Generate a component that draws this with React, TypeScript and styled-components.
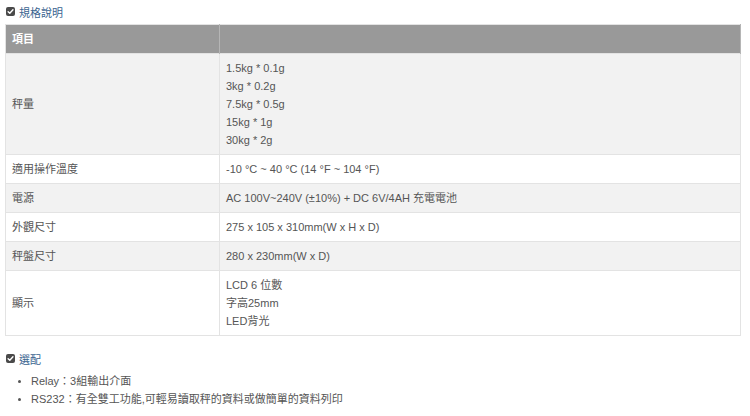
import React from "react";
import styled, { createGlobalStyle } from "styled-components";

const GlobalStyle = createGlobalStyle`
  html, body {
    margin: 0;
    padding: 0;
    background: #fff;
  }
  body {
    font-family: "Liberation Sans", Arial, "Noto Sans CJK TC", sans-serif;
    font-size: 11px;
    color: #555;
  }
`;

const Page = styled.div`
  padding: 3px 9px 0 5px;
`;

const SectionTitle = styled.h3<{ gapTop?: number }>`
  display: flex;
  align-items: center;
  gap: 4px;
  margin: ${({ gapTop }) => gapTop ?? 0}px 0 0 1px;
  height: 17px;
  font-size: 11px;
  font-weight: normal;
  color: #3b6590;
`;

const CheckIcon = styled.span`
  display: inline-flex;
  align-items: center;
  justify-content: center;
  width: 9px;
  height: 9px;
  border-radius: 2px;
  background: #4a4a4a;
`;

const Table = styled.table`
  width: 100%;
  margin-top: 4px;
  border-collapse: collapse;
  border: 1px solid #e3e3e3;
`;

const HeadCell = styled.th`
  background: #999;
  color: #fff;
  font-weight: bold;
  text-align: left;
  padding: 5px 7px 5px 6px;
  line-height: 18px;
  border-right: 1px solid #b5b5b5;
  height: 18px;
`;

const Row = styled.tr<{ shaded: boolean }>`
  background: ${({ shaded }) => (shaded ? "#f2f2f2" : "#fff")};
`;

const Cell = styled.td<{ narrow?: boolean }>`
  padding: 5px 7px 5px 6px;
  line-height: 18px;
  vertical-align: middle;
  border-top: 1px solid #e3e3e3;
  border-right: 1px solid #e3e3e3;
  width: ${({ narrow }) => (narrow ? "200px" : "auto")};
  color: #555;
`;

const Line = styled.div``;

const List = styled.ul`
  margin: 5px 0 0 0;
  padding: 0 0 0 26px;
  line-height: 18px;
  color: #555;
  li::marker {
    font-size: 10px;
  }
`;

function Check() {
  return (
    <CheckIcon>
      <svg width="7" height="7" viewBox="0 0 8 8">
        <path
          d="M1.3 4.2 L3.2 6 L6.8 2"
          fill="none"
          stroke="#fff"
          strokeWidth="1.6"
          strokeLinecap="round"
          strokeLinejoin="round"
        />
      </svg>
    </CheckIcon>
  );
}

const specs: { label: string; lines: string[] }[] = [
  {
    label: "秤量",
    lines: ["1.5kg * 0.1g", "3kg * 0.2g", "7.5kg * 0.5g", "15kg * 1g", "30kg * 2g"],
  },
  { label: "適用操作溫度", lines: ["-10 °C ~ 40 °C (14 °F ~ 104 °F)"] },
  { label: "電源", lines: ["AC 100V~240V (±10%) + DC 6V/4AH 充電電池"] },
  { label: "外觀尺寸", lines: ["275 x 105 x 310mm(W x H x D)"] },
  { label: "秤盤尺寸", lines: ["280 x 230mm(W x D)"] },
  { label: "顯示", lines: ["LCD 6 位數", "字高25mm", "LED背光"] },
];

export default function App() {
  return (
    <Page>
      <GlobalStyle />
      <SectionTitle>
        <Check />
        規格說明
      </SectionTitle>
      <Table>
        <thead>
          <tr>
            <HeadCell style={{ width: 200 }}>項目</HeadCell>
            <HeadCell />
          </tr>
        </thead>
        <tbody>
          {specs.map((s, i) => (
            <Row key={s.label} shaded={i % 2 === 0}>
              <Cell narrow>{s.label}</Cell>
              <Cell>
                {s.lines.map((l) => (
                  <Line key={l}>{l}</Line>
                ))}
              </Cell>
            </Row>
          ))}
        </tbody>
      </Table>
      <SectionTitle gapTop={14}>
        <Check />
        選配
      </SectionTitle>
      <List>
        <li>Relay：3組輸出介面</li>
        <li>RS232：有全雙工功能,可輕易讀取秤的資料或做簡單的資料列印</li>
      </List>
    </Page>
  );
}
